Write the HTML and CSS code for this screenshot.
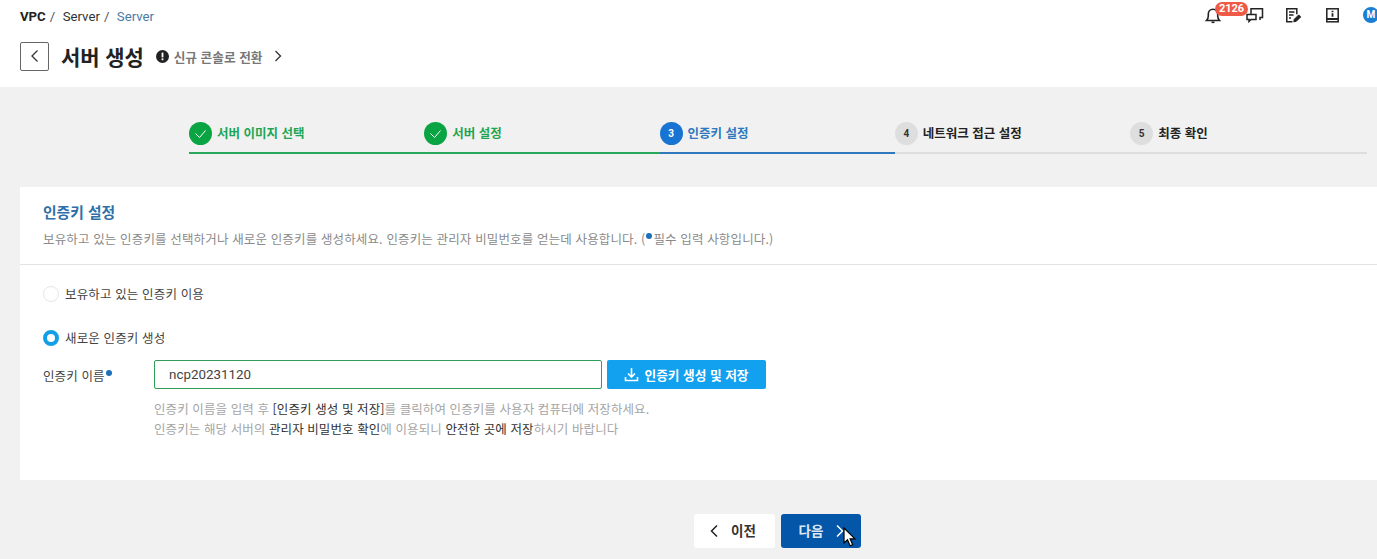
FILE: index.html
```html
<!DOCTYPE html>
<html lang="ko">
<head>
<meta charset="utf-8">
<title>서버 생성</title>
<link rel="stylesheet" href="styles.css">
</head>
<body>
<header class="top">
  <div class="crumb-row">
    <nav class="crumbs"><b>VPC</b><i>/</i><span>Server</span><i>/</i><span class="cur">Server</span></nav>
    <div class="tools">
      <span class="tool bell">
        <svg width="18" height="18" viewBox="0 0 18 18" fill="none" stroke="#222" stroke-width="1.6"><path d="M2.500 14.500h13c-1.200-1.200-1.800-2.300-1.800-4.500V8a4.700 4.700 0 0 0-9.400 0v2c0 2.200-.6 3.300-1.800 4.500z"/><path d="M7.500 16.300h3"/></svg>
        <span class="badge">2126</span>
      </span>
      <span class="tool chat">
        <svg width="18" height="18" viewBox="0 0 18 18" fill="none" stroke="#222" stroke-width="1.500"><path d="M5 8V2.800h11.500V11.500H14v2.500"/><path d="M1 8.500h9v5H5l-2 2v-2H1z" fill="#fff"/></svg>
      </span>
      <span class="tool memo">
        <svg width="18" height="18" viewBox="0 0 18 18" fill="none" stroke="#222" stroke-width="1.500"><path d="M8.500 15.800H2.800V2.800h10v5.500"/><path d="M5 6h5.500M5 9h4.500M5 12h2"/><path d="M9.800 15.800l.5-2.500 4.400-4.400 2 2-4.400 4.400z" fill="#222" stroke-width="1"/></svg>
      </span>
      <span class="tool book">
        <svg width="18" height="18" viewBox="0 0 18 18" fill="none" stroke="#222" stroke-width="1.500"><rect x="2.800" y="2.800" width="11.400" height="13"/><path d="M2.800 13h11.400" stroke-width="2"/><path d="M8.500 4.800v1.400M8.500 7.200v3.600" stroke-width="1.800"/></svg>
      </span>
      <span class="avatar">M</span>
    </div>
  </div>
  <div class="title-row">
    <button class="back" aria-label="뒤로">
      <svg width="10" height="14" viewBox="0 0 10 14" fill="none" stroke="#333" stroke-width="1.300"><path d="M7.500 1.500L2 7l5.500 5.500"/></svg>
    </button>
    <h1>서버 생성</h1>
    <svg class="info" width="13" height="13" viewBox="0 0 13 13"><circle cx="6.500" cy="6.500" r="6.500" fill="#222"/><rect x="5.600" y="2.600" width="1.800" height="4.800" fill="#fff"/><rect x="5.600" y="8.400" width="1.800" height="1.800" fill="#fff"/></svg>
    <span class="switch">신규 콘솔로 전환</span>
    <svg class="switch-arrow" width="8" height="12" viewBox="0 0 8 12" fill="none" stroke="#333" stroke-width="1.300"><path d="M1.500 1l5 5-5 5"/></svg>
  </div>
</header>

<main class="content">
  <ol class="steps">
    <li class="step done"><span class="dot"><svg width="13" height="10" viewBox="0 0 13 10" fill="none" stroke="#fff" stroke-width="1"><path d="M1.500 4.500L5.500 8.500 11.500 1.500"/></svg></span>서버 이미지 선택</li>
    <li class="step done"><span class="dot"><svg width="13" height="10" viewBox="0 0 13 10" fill="none" stroke="#fff" stroke-width="1"><path d="M1.500 4.500L5.500 8.500 11.500 1.500"/></svg></span>서버 설정</li>
    <li class="step active"><span class="dot">3</span>인증키 설정</li>
    <li class="step"><span class="dot">4</span>네트워크 접근 설정</li>
    <li class="step"><span class="dot">5</span>최종 확인</li>
  </ol>

  <section class="card">
    <div class="card-head">
      <h2>인증키 설정</h2>
      <p>보유하고 있는 인증키를 선택하거나 새로운 인증키를 생성하세요. 인증키는 관리자 비밀번호를 얻는데 사용합니다. (<span class="req"></span>필수 입력 사항입니다.)</p>
    </div>
    <div class="card-body">
      <label class="radio-row"><span class="radio"></span>보유하고 있는 인증키 이용</label>
      <label class="radio-row second"><span class="radio on"></span>새로운 인증키 생성</label>
      <div class="field">
        <span class="field-label">인증키 이름<span class="req"></span></span>
        <div class="field-main">
          <div class="input-row">
            <input class="key-input" type="text" value="ncp20231120">
            <button class="save">
              <svg width="15" height="15" viewBox="0 0 15 15" fill="none" stroke="#fff" stroke-width="1.600"><path d="M7.500 1v8.500M4 6.500l3.500 3.500L11 6.500"/><path d="M1.500 10v3.500h12V10"/></svg>
              인증키 생성 및 저장
            </button>
          </div>
          <p class="help">인증키 이름을 입력 후 <em>[인증키 생성 및 저장]</em>를 클릭하여 인증키를 사용자 컴퓨터에 저장하세요.<br>인증키는 해당 서버의 <em>관리자 비밀번호 확인</em>에 이용되니 <em>안전한 곳에 저장</em>하시기 바랍니다</p>
        </div>
      </div>
    </div>
  </section>

  <div class="actions">
    <button class="btn prev">
      <svg width="10" height="14" viewBox="0 0 10 14" fill="none" stroke="#222" stroke-width="1.500"><path d="M8 1.500L2.500 7 8 12.500"/></svg>
      <span>이전</span>
    </button>
    <button class="btn next">
      <span>다음</span>
      <svg width="10" height="14" viewBox="0 0 10 14" fill="none" stroke="#fff" stroke-width="1.500"><path d="M2 1.500L7.500 7 2 12.500"/></svg>
      <svg class="cursor" width="14" height="20" viewBox="0 0 14 20"><path d="M1 1v15l3.500-3.200 2.600 6 2.600-1.100-2.600-5.900H12z" fill="#fff" stroke="#000" stroke-width="1.200"/></svg>
    </button>
  </div>
</main>
</body>
</html>
```

FILE: styles.css
```css
* { box-sizing: border-box; }
html, body { margin: 0; height: 559px; overflow: hidden; }
body {
  font-family: "Noto Sans CJK KR", "Noto Sans", sans-serif;
  color: #222;
  background: #f1f1f1;
  width: 1377px;
}
.top { height: 87px; background: #fff; padding: 0 0 0 20px; }
.crumb-row { height: 33px; display: flex; justify-content: space-between; align-items: center; }
.crumbs { font-family: Roboto, sans-serif; font-size: 13.2px; color: #333; display: flex; align-items: center; }
.crumbs b { font-weight: 700; color: #222; }
.crumbs i { font-style: normal; margin: 0 7.500px 0 4px; color: #555; }
.crumbs .cur { color: #4a7ba8; }
.tools { display: flex; align-items: center; width: 172px; height: 33px; position: relative; }
.tool { position: absolute; top: 6px; width: 18px; height: 18px; display: block; }
.tool svg { display: block; }
.bell { left: -1px; }
.chat { left: 41px; }
.memo { left: 79px; }
.book { left: 119px; }
.badge {
  position: absolute; left: 11px; top: -4px; width: 33px; height: 14px;
  background: #ee5a45; color: #fff; border-radius: 7px;
  font-family: Roboto, sans-serif; font-size: 11px; font-weight: 700;
  line-height: 14px; text-align: center;
}
.avatar {
  position: absolute; left: 158px; top: 7px; width: 16px; height: 16px; border-radius: 50%;
  background: #1a7fd4; color: #fff; font-family: Roboto, sans-serif; font-size: 10px; font-weight: 700;
  line-height: 16px; text-align: center;
}
.title-row { display: flex; align-items: center; height: 30px; margin-top: 8px; }
.back {
  width: 29px; height: 29px; padding: 0; border: 1px solid #666; border-radius: 2px; background: #fff;
  display: flex; align-items: center; justify-content: center;
}
h1 { margin: 0 0 0 12px; font-size: 21px; font-weight: 700; color: #222; line-height: 30px; letter-spacing: -.1px; }
.info { margin-left: 12px; }
.switch { margin-left: 5px; font-size: 12.7px; font-weight: 700; color: #777; }
.switch-arrow { margin-left: 12px; }

.content { padding: 35px 0 0 20px; }
.steps {
  list-style: none; margin: 0 10px 0 169px; padding: 0; display: flex;
}
.step {
  width: 235.400px; height: 32px; display: flex; align-items: flex-start; gap: 5px;
  border-bottom: 2px solid #dedede; font-size: 12.5px; font-weight: 700; line-height: 21px; color: #222;
}
.dot {
  flex: none; width: 23px; height: 23px; border-radius: 50%; background: #dedede; color: #333;
  display: flex; align-items: center; justify-content: center;
  font-family: Roboto, sans-serif; font-size: 10px; font-weight: 700;
}
.step.done { border-color: #27a85a; color: #1fa552; }
.step.done .dot { background: #0aa443; }
.step.active { border-color: #2f78be; color: #2f78be; }
.step.active .dot { background: #1874d2; color: #fff; }
.step:last-child { width: 237px; }

.card { margin-top: 33px; background: #fff; height: 293px; }
.card-head { height: 78px; border-bottom: 1px solid #e3e3e3; padding: 15px 23px 0; }
h2 { margin: 0; font-size: 14.8px; font-weight: 700; color: #2f6fa8; line-height: 20px; }
.card-head p { margin: 8px 0 0; font-size: 12.5px; color: #8a8a8a; line-height: 18px; letter-spacing: .14px; }
.req {
  display: inline-block; width: 6px; height: 6px; border-radius: 50%; background: #1d6fb8;
  vertical-align: 5px; margin: 0 1px 0 1px;
}
.card-body { padding: 20px 23px 0; }
.radio-row { display: flex; align-items: center; gap: 6px; height: 18px; padding-bottom: 2px; font-size: 12.5px; color: #444; letter-spacing: .14px; }
.radio-row.second { margin-top: 26px; }
.radio { flex: none; width: 16px; height: 16px; margin-bottom: -2px; border-radius: 50%; border: 1px solid #e6e6e6; background: #fff; }
.radio.on { border: 4px solid #139fe6; }
.field { display: flex; margin-top: 13px; }
.field-label { width: 111px; height: 29px; line-height: 32px; font-size: 12.5px; color: #444; letter-spacing: .1px; white-space: nowrap; }
.input-row { display: flex; gap: 5px; }
.key-input {
  width: 448px; height: 29px; border: 1px solid #2e9e58; border-radius: 2px; padding: 0 14px;
  font-family: Roboto, sans-serif; font-size: 13.4px; color: #444; background: #fff; outline: 0;
}
.save {
  width: 159px; height: 29px; border: 0; border-radius: 2px; background: #11a1ef; color: #fff;
  font-family: inherit; font-size: 12.7px; font-weight: 700; padding: 0;
  display: flex; align-items: center; justify-content: center; gap: 5px;
}
.help { margin: 10px 0 0; font-size: 12.5px; line-height: 20px; color: #a5a5a5; letter-spacing: .08px; }
.help em { font-style: normal; color: #333; }

.actions { display: flex; gap: 6px; margin: 34px 0 0 674px; }
.btn {
  position: relative; width: 80px; height: 34px; border: 0; border-radius: 3px; padding: 0;
  font-family: inherit; font-size: 13.5px; font-weight: 700;
  display: flex; align-items: center; justify-content: center; gap: 12px;
}
.btn span { margin-bottom: 2px; }
.prev { width: 81px; padding-right: 4px; background: #fff; color: #333; }
.next { padding-left: 2px; background: #0456a8; color: #dce8f5; }
.cursor { position: absolute; left: 62px; top: 13px; }
```
